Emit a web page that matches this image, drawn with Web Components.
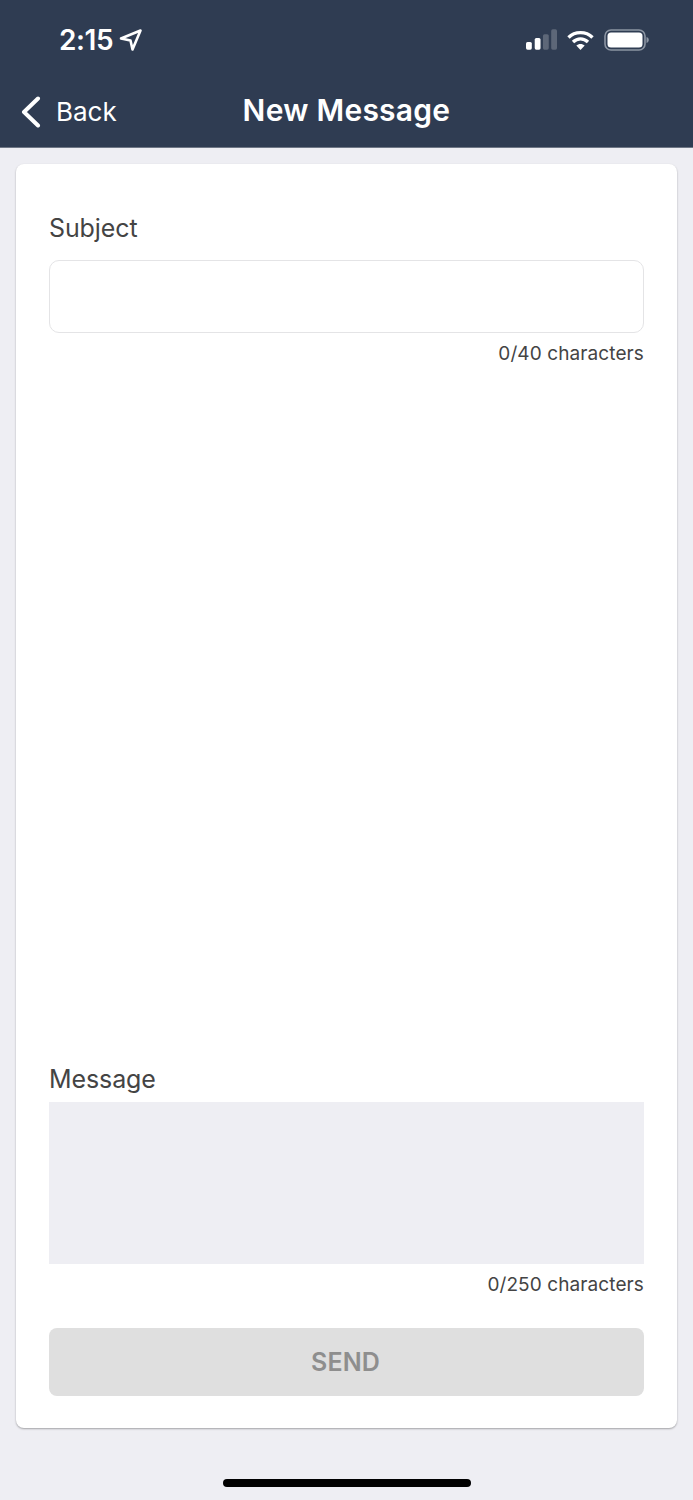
<!DOCTYPE html>
<html lang="en">
<head>
<meta charset="utf-8">
<title>New Message</title>
<style>
html, body { margin: 0; height: 1500px; background: #eeeef3; }
body { font-family: Inter, "Liberation Sans", sans-serif; display: flex; flex-direction: column; overflow: hidden; }
</style>
</head>
<body>
<app-header></app-header>
<message-form></message-form>
<home-bar></home-bar>

<script>
class StatusBar extends HTMLElement {
  constructor() {
    super();
    this.attachShadow({ mode: "open" }).innerHTML = `
<style>
:host { display: flex; height: 78px; box-sizing: border-box; padding: 1px 44px 0 59px; align-items: center; justify-content: space-between; color: #fff; }
.time { display: flex; align-items: center; gap: 6px; font-size: 28px; font-weight: 600; letter-spacing: -0.4px; }
.icons { display: flex; align-items: center; gap: 10px; }
svg { display: block; }
</style>
<div class="time">2:15
  <svg width="24" height="24" viewBox="0 0 24 24" fill="none" stroke="#fff" stroke-width="2.600" stroke-linejoin="round" stroke-linecap="round">
    <path d="M2 10.500 21.500 2.500 13.500 21.500 11.500 12.500Z"/>
  </svg>
</div>
<div class="icons">
  <svg width="31" height="21" viewBox="0 0 32 21">
    <rect x="0" y="13" width="6" height="8" rx="1.600" fill="#fff"/>
    <rect x="9" y="9" width="6" height="12" rx="1.600" fill="#fff"/>
    <rect x="17.500" y="5" width="6" height="16" rx="1.600" fill="#5d6778"/>
    <rect x="26" y="0" width="6" height="21" rx="1.600" fill="#5d6778"/>
  </svg>
  <svg width="27" height="20" viewBox="0 0 27 20" fill="none" stroke="#fff" stroke-width="3.400">
    <path d="M1.500 7.500C8 1 19 1 25.500 7.500"/>
    <path d="M6 12C10.500 7.800 16.500 7.800 21 12"/>
    <path d="M13.500 20 9.300 15.500C11.500 13.400 15.500 13.400 17.700 15.500Z" fill="#fff" stroke="none"/>
  </svg>
  <svg width="45" height="22" viewBox="0 0 45 22">
    <rect x="1" y="1" width="40" height="20" rx="6" fill="none" stroke="#8c95a3" stroke-width="1.600"/>
    <rect x="3.500" y="3.500" width="35" height="15" rx="3.500" fill="#fff"/>
    <path d="M42.500 8v6c1.500-.4 2.300-1.600 2.300-3s-.8-2.600-2.300-3Z" fill="#8c95a3"/>
  </svg>
</div>`;
  }
}

class AppHeader extends HTMLElement {
  constructor() {
    super();
    this.attachShadow({ mode: "open" }).innerHTML = `
<style>
:host { display: block; height: 148px; box-sizing: border-box; border-bottom: 1px solid #6f7786; background: #2f3c52; color: #fff; flex: none; }
nav { position: relative; display: flex; align-items: center; justify-content: center; height: 66px; }
.back { position: absolute; left: 21px; top: 1px; bottom: 0; display: flex; align-items: center; gap: 15px; font-size: 26px; }
h1 { margin: 0 0 2px; font-size: 30px; font-weight: 600; letter-spacing: 0.26px; }
svg { display: block; }
</style>
<status-bar></status-bar>
<nav>
  <span class="back">
    <svg width="20" height="32" viewBox="0 0 20 32" fill="none" stroke="#fff" stroke-width="4" stroke-linecap="round" stroke-linejoin="round">
      <path d="M17 2.500 3 16l14 13.500"/>
    </svg>
    Back
  </span>
  <h1>New Message</h1>
</nav>`;
  }
}

class FormField extends HTMLElement {
  constructor() {
    super();
    const kind = this.getAttribute("kind");
    const max = this.getAttribute("max");
    const field = kind === "area" ? "<textarea></textarea>" : '<input type="text">';
    this.attachShadow({ mode: "open" }).innerHTML = `
<style>
:host { display: block; }
label { display: block; font-size: 25px; line-height: 32px; letter-spacing: -0.1px; color: #444; }
input, textarea { display: block; width: 100%; box-sizing: border-box; margin: 0; padding: 0 12px; font: inherit; outline: none; resize: none; }
input { height: 73px; margin-top: 16px; background: #fff; border: 1.5px solid #e4e4e6; border-radius: 10px; }
textarea { height: 162px; margin-top: 7px; background: #eeeef3; border: 0; border-radius: 0; }
.count { margin-top: 9px; text-align: right; font-size: 19px; line-height: 24px; letter-spacing: 0.1px; color: #444; }
</style>
<label><slot></slot></label>
${field}
<div class="count">0/${max} characters</div>`;
  }
}

class SendButton extends HTMLElement {
  constructor() {
    super();
    this.attachShadow({ mode: "open" }).innerHTML = `
<style>
:host { display: flex; align-items: center; justify-content: center; height: 68px; padding: 0 2px 0 0; box-sizing: border-box; background: #dfdfdf; border-radius: 8px; color: #8e8e8e; font-size: 25px; font-weight: 600; letter-spacing: 0.1px; }
</style>
<slot></slot>`;
  }
}

class MessageForm extends HTMLElement {
  constructor() {
    super();
    this.attachShadow({ mode: "open" }).innerHTML = `
<style>
:host { display: flex; flex-direction: column; height: 1264px; box-sizing: border-box; margin: 16px 16px 0; padding: 48px 33px 32px; background: #fff; border-radius: 8px; box-shadow: 0 1px 2px rgba(0, 0, 0, .32); flex: none; }
.spacer { flex: 1; }
send-button { margin-top: 31px; }
</style>
<form-field max="40">Subject</form-field>
<div class="spacer"></div>
<form-field kind="area" max="250">Message</form-field>
<send-button>SEND</send-button>`;
  }
}

class HomeBar extends HTMLElement {
  constructor() {
    super();
    this.attachShadow({ mode: "open" }).innerHTML = `
<style>
:host { display: block; width: 248px; height: 8px; margin: 51px auto 0; background: #000; border-radius: 4px; flex: none; }
</style>`;
  }
}

customElements.define("status-bar", StatusBar);
customElements.define("app-header", AppHeader);
customElements.define("form-field", FormField);
customElements.define("send-button", SendButton);
customElements.define("message-form", MessageForm);
customElements.define("home-bar", HomeBar);
</script>
</body>
</html>
